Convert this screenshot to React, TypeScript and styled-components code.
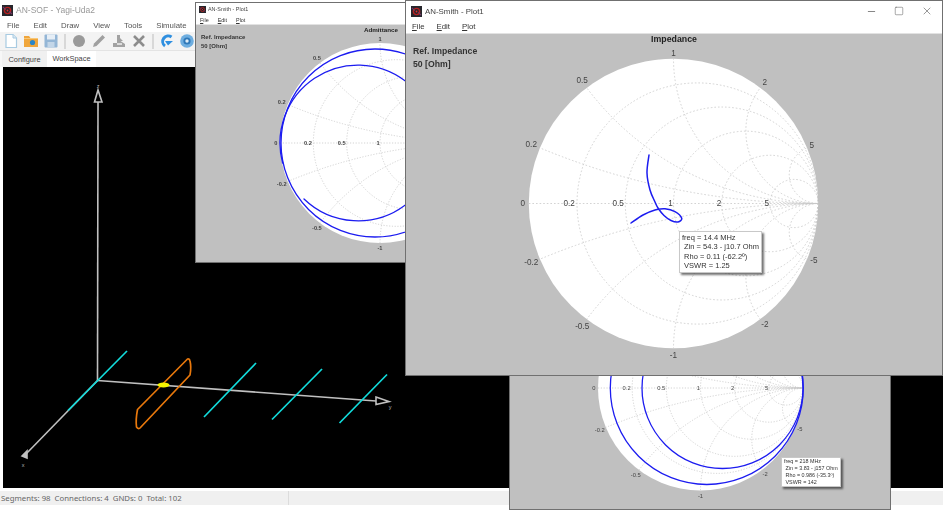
import styled, { createGlobalStyle } from "styled-components";
import { Minus, Square, X } from "lucide-react";

const GlobalStyle = createGlobalStyle`
  html, body {
    margin: 0;
    padding: 0;
    background: #fff;
    font-family: "Liberation Sans", sans-serif;
  }
`;

const Desktop = styled.div`
  position: relative;
  width: 943px;
  height: 510px;
  overflow: hidden;
  background: #fff;
`;

/* main AN-SOF window */
const MainWindow = styled.div`
  display: flex;
  flex-direction: column;
  height: 505px;
  color: #555;
  filter: blur(0.45px);
`;

const TitleBar = styled.div`
  display: flex;
  align-items: center;
  gap: 3px;
  height: 16px;
  padding: 4px 0 0 2px;
  box-sizing: border-box;
  font-size: 8.5px;
  color: #999;
`;

const MenuBar = styled.div`
  display: flex;
  align-items: center;
  gap: 14px;
  height: 16px;
  padding: 2px 0 0 7px;
  box-sizing: border-box;
  font-size: 7.8px;
`;

const Toolbar = styled.div`
  display: flex;
  align-items: center;
  gap: 4px;
  height: 18px;
  padding-left: 3px;
  background: #f3f3f3;
`;

const ToolSlot = styled.svg`
  width: 16px;
  height: 16px;
  flex: none;
`;

const ToolSeparator = styled.div`
  width: 2px;
  height: 15px;
  margin: 0 1px;
  background: #d8d8d8;
`;

const TabStrip = styled.div`
  display: flex;
  align-items: stretch;
  height: 17px;
  padding-left: 2px;
  background: #f7f7f7;
  border-top: 1px solid #e4e4e4;
  box-sizing: border-box;
`;

const Tab = styled.div<{ $active?: boolean }>`
  display: flex;
  align-items: center;
  justify-content: center;
  width: ${(p) => (p.$active ? 49 : 45)}px;
  padding-bottom: ${(p) => (p.$active ? 2 : 0)}px;
  box-sizing: border-box;
  font-size: 7.4px;
  color: #444;
  background: ${(p) => (p.$active ? "#fff" : "#f0f0f0")};
`;

const Viewport = styled.div`
  flex: 1;
  margin-left: 3px;
  background: #000;
`;

const ViewportDrawing = styled.svg`
  display: block;
  width: 100%;
  height: 100%;
`;

const StatusBar = styled.div`
  display: flex;
  align-items: center;
  height: 14px;
  margin-top: 3px;
  background: #f0f0f0;
  font-family: "Noto Sans", sans-serif;
  font-size: 7.8px;
  color: #666;
`;

const StatusText = styled.div`
  width: 289px;
  padding: 1px 0 0 1px;
  box-sizing: border-box;
  white-space: pre;
  border-right: 1px solid #dcdcdc;
  line-height: 13px;
`;

/* floating plot windows */
const PlotFrame = styled.div<{ $left: number; $top: number; $width: number; $height: number; $soft: number }>`
  position: absolute;
  left: ${(p) => p.$left}px;
  top: ${(p) => p.$top}px;
  width: ${(p) => p.$width}px;
  height: ${(p) => p.$height}px;
  box-sizing: border-box;
  display: flex;
  flex-direction: column;
  border: 1px solid #707070;
  background: #fff;
  filter: blur(${(p) => p.$soft}px);
`;

const PlotTitle = styled.div<{ $big?: boolean }>`
  display: flex;
  align-items: center;
  gap: ${(p) => (p.$big ? 3 : 2)}px;
  height: ${(p) => (p.$big ? 19 : 10)}px;
  padding-left: ${(p) => (p.$big ? 5 : 3)}px;
  padding-top: ${(p) => (p.$big ? 1 : 2)}px;
  box-sizing: border-box;
  font-size: ${(p) => (p.$big ? 7.9 : 5.4)}px;
  color: #444;
`;

const WindowControls = styled.div`
  display: flex;
  align-items: center;
  gap: 17px;
  margin-left: auto;
  margin-right: 9px;
  color: #444;
`;

const PlotMenu = styled.div<{ $big?: boolean }>`
  display: flex;
  align-items: center;
  gap: ${(p) => (p.$big ? 12 : 9)}px;
  height: ${(p) => (p.$big ? 13 : 11)}px;
  padding-left: ${(p) => (p.$big ? 6 : 4)}px;
  padding-top: ${(p) => (p.$big ? 0 : 2)}px;
  box-sizing: border-box;
  font-size: ${(p) => (p.$big ? 7.8 : 5.4)}px;
  color: #333;
  u {
    text-underline-offset: 1px;
  }
`;

const PlotClient = styled.div`
  position: relative;
  flex: 1;
  background: #c0c0c0;
  border-top: 1px solid #e2e2e2;
  overflow: hidden;
`;

const ChartSvg = styled.svg`
  position: absolute;
  left: 0;
  top: 0;
  width: 100%;
  height: 100%;
`;

const RefNote = styled.div<{ $big?: boolean }>`
  position: absolute;
  left: ${(p) => (p.$big ? 7 : 5)}px;
  top: ${(p) => (p.$big ? 11 : 8)}px;
  font-weight: 700;
  font-size: ${(p) => (p.$big ? 8.7 : 6)}px;
  line-height: ${(p) => (p.$big ? 13 : 9)}px;
  color: #333;
`;

const Readout = styled.div<{ $left: number; $top: number; $small?: boolean }>`
  position: absolute;
  left: ${(p) => p.$left}px;
  top: ${(p) => p.$top}px;
  padding: ${(p) => (p.$small ? "0 2px" : "1px 2px")};
  background: #fff;
  border: 1px solid #c8c8c8;
  box-shadow: 2px 2px 2px rgba(0, 0, 0, 0.55);
  font-size: ${(p) => (p.$small ? 5.4 : 7.5)}px;
  line-height: ${(p) => (p.$small ? 6.9 : 9.4)}px;
  color: #333;
  white-space: pre;
`;

type Pt = [number, number];

// catmull-rom through the points, turned into cubic segments
const smooth = (pts: Pt[]) => {
  let d = `M${pts[0][0]} ${pts[0][1]}`;
  for (let i = 0; i < pts.length - 1; i++) {
    const p0 = pts[i - 1] || pts[i];
    const p1 = pts[i];
    const p2 = pts[i + 1];
    const p3 = pts[i + 2] || p2;
    const c1x = p1[0] + (p2[0] - p0[0]) / 6;
    const c1y = p1[1] + (p2[1] - p0[1]) / 6;
    const c2x = p2[0] - (p3[0] - p1[0]) / 6;
    const c2y = p2[1] - (p3[1] - p1[1]) / 6;
    d += ` C${c1x} ${c1y} ${c2x} ${c2y} ${p2[0]} ${p2[1]}`;
  }
  return d;
};

// label offsets measured on the big chart, in units of the radius
const labels: [string, number, number][] = [
  ["1", 0, -1.038],
  ["0.5", -0.631, -0.852],
  ["2", 0.631, -0.838],
  ["0.2", -0.983, -0.41],
  ["5", 0.955, -0.403],
  ["0", -1.041, 0],
  ["0.2", -0.721, 0],
  ["0.5", -0.383, 0],
  ["1", -0.02, 0],
  ["2", 0.314, 0],
  ["5", 0.645, 0],
  ["-0.2", -0.983, 0.41],
  ["-5", 0.97, 0.397],
  ["-0.5", -0.631, 0.852],
  ["-2", 0.631, 0.838],
  ["-1", 0, 1.052],
];

const gridValues = [0.2, 0.5, 1, 2, 5];

type SmithProps = {
  id: string;
  cx: number;
  cy: number;
  r: number;
  left: number;
  top: number;
  width: number;
  height: number;
  title?: string;
  titleX?: number;
  boldLabels?: boolean;
  children?: React.ReactNode;
};

const SmithChart = ({ id, cx, cy, r, left, top, width, height, title, titleX, boldLabels, children }: SmithProps) => {
  const font = (r / 145) * 8.2;
  const dash = r > 120 ? "1.6 2" : "1.2 1.6";
  return (
    <ChartSvg viewBox={`${left} ${top} ${width} ${height}`} preserveAspectRatio="xMinYMin slice">
      <defs>
        <clipPath id={id}>
          <circle cx={cx} cy={cy} r={r} />
        </clipPath>
      </defs>
      <circle cx={cx} cy={cy} r={r} fill="#fff" />
      <g clipPath={`url(#${id})`} fill="none" stroke="#c8c8c8" strokeWidth={0.8} strokeDasharray={dash}>
        <line x1={cx - r} y1={cy} x2={cx + r} y2={cy} />
        {gridValues.map((v) => (
          <circle key={`r${v}`} cx={cx + (r * v) / (1 + v)} cy={cy} r={r / (1 + v)} />
        ))}
        {gridValues.map((v) => (
          <g key={`x${v}`}>
            <circle cx={cx + r} cy={cy - r / v} r={r / v} />
            <circle cx={cx + r} cy={cy + r / v} r={r / v} />
          </g>
        ))}
      </g>
      <g
        fontSize={font}
        fontWeight={boldLabels ? 700 : 400}
        fill="#444"
        textAnchor="middle"
        dominantBaseline="central"
      >
        {labels.map(([text, dx, dy], i) => (
          <text key={i} x={cx + dx * r} y={cy + dy * r}>
            {text}
          </text>
        ))}
      </g>
      {title && (
        <text
          x={titleX}
          y={cy - r * 1.138}
          fontWeight={700}
          fontSize={font + 0.6}
          fill="#222"
          textAnchor="middle"
          dominantBaseline="central"
        >
          {title}
        </text>
      )}
      <g fill="none" stroke="#1c1cf0" strokeLinecap="round" strokeLinejoin="round" strokeWidth={1.3}>
        {children}
      </g>
    </ChartSvg>
  );
};

const WindowGlyph = ({ size }: { size: number }) => (
  <svg width={size} height={size} viewBox="0 0 12 12">
    <rect width="12" height="12" fill="#26262c" />
    <circle cx="6" cy="6" r="3.4" fill="none" stroke="#b52020" strokeWidth="1.6" />
    <path d="M1 2 L4 5 M11 10 L8 7" stroke="#7a3a6a" strokeWidth="1.2" />
    <circle cx="6" cy="6" r="1" fill="#e03030" />
  </svg>
);

const PlotHead = ({ big }: { big?: boolean }) => (
  <>
    <PlotTitle $big={big}>
      <WindowGlyph size={big ? 11 : 7} />
      AN-Smith - Plot1
      {big && (
        <WindowControls>
          <Minus size={11} strokeWidth={1.4} />
          <Square size={10} strokeWidth={1.1} />
          <X size={12} strokeWidth={1.1} />
        </WindowControls>
      )}
    </PlotTitle>
    <PlotMenu $big={big}>
      <span>
        <u>F</u>ile
      </span>
      <span>
        <u>E</u>dit
      </span>
      <span>
        <u>P</u>lot
      </span>
    </PlotMenu>
  </>
);

const AntennaView = () => (
  <ViewportDrawing viewBox="3 67 940 421">
    <g fill="none" stroke="#c0c0c0" strokeWidth={1.6}>
      <line x1="97.5" y1="380.5" x2="98" y2="102" />
      <path d="M98 90 L94.5 102 L102 102 Z" />
      <line x1="97.5" y1="380.5" x2="376" y2="401" />
      <path d="M376 397 L389 401.5 L376 404.5 Z" />
      <line x1="97.5" y1="380.5" x2="26" y2="454" />
      <path d="M22 456 L27 451 L27 458 Z" fill="#c0c0c0" />
    </g>
    <g fontSize="5.5" fill="#b5b5b5" textAnchor="middle">
      <text x="98" y="88">z</text>
      <text x="390" y="409">y</text>
      <text x="23" y="467">x</text>
    </g>
    <g stroke="#12dcdc" strokeWidth={1.7}>
      <line x1="68" y1="410.5" x2="127" y2="351" />
      <line x1="204" y1="417" x2="256" y2="363" />
      <line x1="272" y1="419.5" x2="322" y2="369" />
      <line x1="339.5" y1="423" x2="387" y2="374.5" />
    </g>
    <path
      d="M187.5 359 Q189.5 358.5 190 361 Q191.5 367 190 375 L140 428 Q138.5 429.5 136.5 427 Q135.5 420 137.5 409.5 Z"
      fill="none"
      stroke="#e8780c"
      strokeWidth={1.7}
      strokeLinejoin="round"
    />
    <ellipse cx="163.5" cy="385" rx="6" ry="2.4" fill="#f4f400" />
  </ViewportDrawing>
);

const Tools = () => (
  <Toolbar>
    <ToolSlot viewBox="0 0 16 16">
      <path d="M3 1.5 H10 L13.5 5 V14.5 H3 Z" fill="#fff" stroke="#a8cbe2" strokeWidth="1.2" />
      <path d="M10 1.5 V5 H13.5" fill="#dbe9f3" stroke="#a8cbe2" />
    </ToolSlot>
    <ToolSlot viewBox="0 0 16 16">
      <path d="M1 3 H6 L7.5 5 H15 V14 H1 Z" fill="#f0a63c" />
      <circle cx="9.5" cy="9.5" r="2.6" fill="#2a86c8" />
      <path d="M1 5.5 H15" stroke="#f8c878" />
    </ToolSlot>
    <ToolSlot viewBox="0 0 16 16">
      <rect x="1.5" y="1.5" width="13" height="13" rx="1" fill="#94b6d6" />
      <rect x="4" y="1.5" width="8" height="5" fill="#e6eef6" />
      <rect x="4.5" y="9" width="7" height="5.5" fill="#c3d6e8" />
    </ToolSlot>
    <ToolSeparator />
    <ToolSlot viewBox="0 0 16 16">
      <circle cx="8" cy="8" r="6" fill="#9a9a9a" />
    </ToolSlot>
    <ToolSlot viewBox="0 0 16 16">
      <path d="M2 14 L3 10.5 L11.5 2 L14 4.5 L5.5 13 Z" fill="#a0a0a0" />
    </ToolSlot>
    <ToolSlot viewBox="0 0 16 16">
      <path d="M6 2 L9 2 L9 5 L12 8 L9.5 8 L14 11 V14 H2 V10 H6 Z" fill="#a2a2a2" />
      <rect x="6" y="10" width="5" height="2" fill="#dcdcdc" />
    </ToolSlot>
    <ToolSlot viewBox="0 0 16 16">
      <path d="M3 3 L13 13 M13 3 L3 13" stroke="#8c8c8c" strokeWidth="2.6" />
    </ToolSlot>
    <ToolSeparator />
    <ToolSlot viewBox="0 0 16 16">
      <path d="M12.5 4 A5.5 5.5 0 1 0 6 13" fill="none" stroke="#2f8fe0" strokeWidth="3" />
      <path d="M6 8 H14 L9 12.5 Z" fill="#2f8fe0" />
    </ToolSlot>
    <ToolSlot viewBox="0 0 16 16">
      <circle cx="8" cy="8" r="6.8" fill="#6eaee0" />
      <circle cx="8" cy="8" r="3.6" fill="#2f78b8" />
      <circle cx="8" cy="8" r="1.7" fill="#dcecf8" />
    </ToolSlot>
  </Toolbar>
);

const App = () => (
  <Desktop>
    <GlobalStyle />
    <MainWindow>
      <TitleBar>
        <WindowGlyph size={11} />
        AN-SOF - Yagi-Uda2
      </TitleBar>
      <MenuBar>
        <span>File</span>
        <span>Edit</span>
        <span>Draw</span>
        <span>View</span>
        <span>Tools</span>
        <span>Simulate</span>
      </MenuBar>
      <Tools />
      <TabStrip>
        <Tab>Configure</Tab>
        <Tab $active>WorkSpace</Tab>
      </TabStrip>
      <Viewport>
        <AntennaView />
      </Viewport>
      <StatusBar>
        <StatusText>{"Segments: 98  Connections: 4  GNDs: 0  Total: 102"}</StatusText>
      </StatusBar>
    </MainWindow>

    <PlotFrame $left={509} $top={244} $width={382} $height={266} $soft={0.45}>
      <PlotHead />
      <PlotClient>
        <SmithChart id="lower" cx={700.5} cy={388} r={102.5} left={510} top={267} width={380} height={242}>
          <circle cx={706.8} cy={388} r={96.5} />
          <circle cx={722.5} cy={388} r={80.5} />
        </SmithChart>
        <Readout $small $left={271} $top={190}>
          {"freq = 218 MHz\n Zin = 3.83 - j157 Ohm\n Rho = 0.986 (-35.3º)\n VSWR = 142"}
        </Readout>
      </PlotClient>
    </PlotFrame>

    <PlotFrame $left={195} $top={2} $width={211} $height={261} $soft={0.45}>
      <PlotHead />
      <PlotClient>
        <SmithChart
          id="admit"
          cx={380}
          cy={143}
          r={100}
          left={196}
          top={25}
          width={209}
          height={237}
          title="Admittance"
          titleX={381}
          boldLabels
        >
          <circle cx={375} cy={143} r={94} />
          <path d="M405 80.8 A78 78 0 0 0 282.6 163" />
          <path d="M304 199 A78 78 0 0 0 405 205.2" />
        </SmithChart>
        <RefNote>
          Ref. Impedance
          <br />
          50 [Ohm]
        </RefNote>
      </PlotClient>
    </PlotFrame>

    <PlotFrame $left={405} $top={0} $width={538} $height={376} $soft={0.2}>
      <PlotHead big />
      <PlotClient>
        <SmithChart id="imped" cx={673.5} cy={203.5} r={144.7} left={406} top={34} width={536} height={341} title="Impedance" titleX={674}>
          <path
            d={smooth([[649, 155], [647, 173], [650, 190], [655, 202], [658, 208], [664, 215.5], [671, 220.5], [678, 222], [681.7, 218.3], [675, 211.7], [665, 208.7], [655, 210], [643, 215], [631, 223]])}
            strokeWidth={1.5}
          />
        </SmithChart>
        <RefNote $big>
          Ref. Impedance
          <br />
          50 [Ohm]
        </RefNote>
        <Readout $left={273} $top={197}>
          {"freq = 14.4 MHz\n Zin = 54.3 - j10.7 Ohm\n Rho = 0.11 (-62.2º)\n VSWR = 1.25"}
        </Readout>
      </PlotClient>
    </PlotFrame>
  </Desktop>
);

export default App;
